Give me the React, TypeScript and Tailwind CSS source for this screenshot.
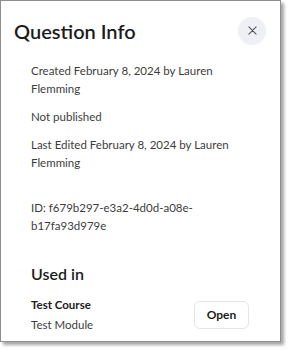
export default function App() {
  return (
    <div className="h-[350px] w-[288px] bg-white" style={{ fontFamily: "Lato, 'Noto Sans', sans-serif" }}>
      <div className="flex h-[342px] w-[281px] flex-col border border-[#8e8e8e] bg-white shadow-[3px_3px_3px_rgba(0,0,0,0.35)]">
        <div className="flex items-center justify-between pl-[13px] pr-[14px] pt-[15px]">
          <h2 className="pt-[1px] text-[20px] font-semibold leading-[28px] text-[#1c1c1c]">Question Info</h2>
          <button className="flex h-7 w-7 items-center justify-center rounded-full bg-[#eef0f5]">
            <svg width="9" height="9" viewBox="0 0 10 10" stroke="#555" strokeWidth="1.2" strokeLinecap="round">
              <path d="M1 1l8 8M9 1L1 9" />
            </svg>
          </button>
        </div>
        <div className="mt-[17px] flex flex-col gap-[10px] px-[30px] text-[11.5px] leading-[18px] text-[#3d3d3d]">
          <p>Created February 8, 2024 by Lauren Flemming</p>
          <p>Not published</p>
          <p>Last Edited February 8, 2024 by Lauren Flemming</p>
          <p className="mt-[17px]">ID: f679b297-e3a2-4d0d-a08e-b17fa93d979e</p>
        </div>
        <div className="mt-[28px] px-[30px]">
          <h3 className="text-[16px] font-semibold leading-[22px] text-[#1c1c1c]">Used in</h3>
          <div className="mt-[10px] flex items-center justify-between pr-[1px]">
            <div className="text-[11.5px] leading-[20px]">
              <p className="font-bold text-[#1c1c1c]">Test Course</p>
              <p className="text-[#3d3d3d]">Test Module</p>
            </div>
            <button className="h-7 w-[55px] rounded-md border border-[#e3e5ea] text-[12px] font-bold text-[#1c1c1c]">
              Open
            </button>
          </div>
        </div>
      </div>
    </div>
  );
}
